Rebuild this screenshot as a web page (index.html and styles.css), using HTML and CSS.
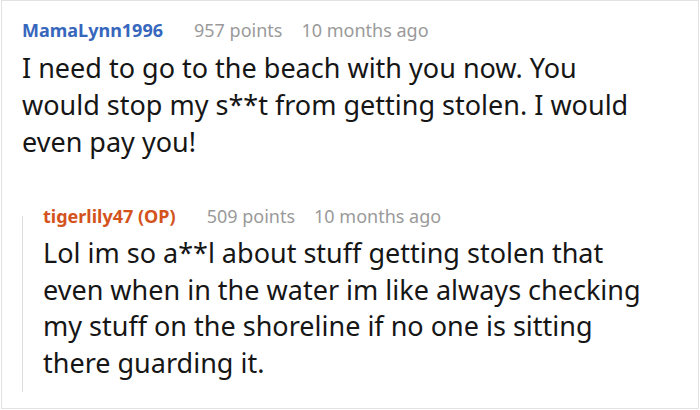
FILE: index.html
```html
<!DOCTYPE html>
<html>
<head>
<meta charset="utf-8">
<link rel="stylesheet" href="styles.css">
</head>
<body>
<div class="frame">
  <div class="comment">
    <div class="meta">
      <span class="name">MamaLynn1996</span>
      <span class="info">957 points</span>
      <span class="info">10 months ago</span>
    </div>
    <p class="text">I need to go to the beach with you now. You<br>would stop my s**t from getting stolen. I would<br>even pay you!</p>
  </div>
  <div class="reply">
    <div class="meta">
      <span class="name op">tigerlily47 (OP)</span>
      <span class="info">509 points</span>
      <span class="info">10 months ago</span>
    </div>
    <p class="text">Lol im so a**l about stuff getting stolen that<br>even when in the water im like always checking<br>my stuff on the shoreline if no one is sitting<br>there guarding it.</p>
  </div>
</div>
</body>
</html>
```
FILE: styles.css
```css
html, body {
  margin: 0;
  padding: 0;
  background: #fff;
}
body {
  font-family: "Noto Sans", "DejaVu Sans", sans-serif;
  color: #161616;
}
.frame {
  width: 698px;
  height: 409px;
  margin-left: 1px;
  border: 1px solid #e2e2e2;
  box-sizing: border-box;
  padding: 17px 0 0 20px;
}
.meta {
  display: flex;
  align-items: baseline;
  gap: 19px;
  font-size: 18px;
  line-height: 24px;
  white-space: nowrap;
}
.name {
  font-weight: 700;
  font-size: 18px;
  color: #3767bd;
  margin-right: 12px;
}
.name.op {
  color: #d4531c;
}
.info {
  color: #9a9a9a;
}
.text {
  margin: 7px 0 0 0;
  font-size: 27px;
  line-height: 37px;
  white-space: nowrap;
}
.reply {
  display: flex;
  flex-direction: column;
  margin-top: 56px;
  border-left: 1px solid #dcdcdc;
  padding-left: 20px;
  padding-bottom: 10px;
}
.reply .meta {
  margin-top: -12px;
}
.reply .text {
  line-height: 36.7px;
}
```
